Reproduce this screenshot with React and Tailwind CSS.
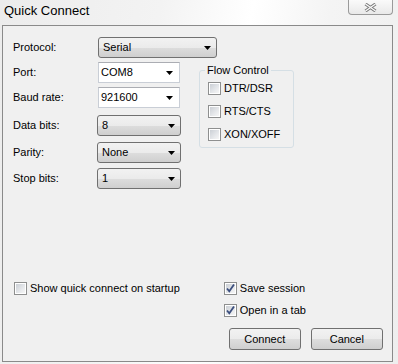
import { useState } from "react";

const font = { fontFamily: '"Liberation Sans", Arial, sans-serif' };

const Arrow = () => (
  <svg width="7" height="4" viewBox="0 0 7 4" className="shrink-0">
    <polygon points="0,0 7,0 3.5,4" fill="#000" />
  </svg>
);

// grey button-like dropdown (non editable)
const Combo = ({ value, className = "" }) => (
  <div
    className={`flex h-[21px] items-center justify-between rounded-[3px] border border-[#707070] bg-[linear-gradient(#f2f2f2_0%,#ebebeb_50%,#dddddd_51%,#cfcfcf_100%)] pl-[4px] pr-[5px] ${className}`}
  >
    <span>{value}</span>
    <Arrow />
  </div>
);

// white editable dropdown
const EditCombo = ({ value, className = "" }) => (
  <div
    className={`flex h-[21px] items-center justify-between border border-[#c9ced6] border-t-[#abadb3] bg-white pl-[2px] pr-[6px] ${className}`}
  >
    <span>{value}</span>
    <Arrow />
  </div>
);

const CheckBox = ({ checked, label, onClick }) => (
  <div className="flex h-[13px] cursor-default items-center" onClick={onClick}>
    <div className="flex h-[13px] w-[13px] shrink-0 items-center justify-center border border-[#8e8f8f] bg-white">
      <div className="relative h-[9px] w-[9px] bg-[linear-gradient(135deg,#cbcfd5_0%,#e6e8eb_60%,#f6f6f6_100%)]">
        {checked && (
          <svg width="11" height="11" viewBox="0 0 11 11" className="absolute left-[-1px] top-[-1px]">
            <path d="M2 5.5 L4.3 8.3 L9 1.5" fill="none" stroke="#3c4f7e" strokeWidth="1.8" />
          </svg>
        )}
      </div>
    </div>
    <span className="ml-[3px]">{label}</span>
  </div>
);

const Button = ({ children }) => (
  <button className="flex h-[22px] w-[72px] items-center justify-center rounded-[3px] border border-[#707070] bg-[linear-gradient(#f2f2f2_0%,#ebebeb_50%,#dddddd_51%,#cfcfcf_100%)] text-black">
    {children}
  </button>
);

const Row = ({ label, children, className = "" }) => (
  <div className={`flex items-center ${className}`}>
    <span className="w-[84px] shrink-0">{label}</span>
    {children}
  </div>
);

export default function App() {
  const [flow, setFlow] = useState({ dtr: false, rts: false, xon: false });
  const [showStartup, setShowStartup] = useState(false);
  const [saveSession, setSaveSession] = useState(true);
  const [openTab, setOpenTab] = useState(true);

  return (
    <div
      className="h-[364px] w-[398px] overflow-hidden bg-[linear-gradient(100deg,#ececec_0%,#f3f3f3_35%,#ffffff_55%,#f4f4f4_72%,#eeeeee_100%)] text-[11px] leading-[13px] text-black"
      style={font}
    >
      {/* title bar */}
      <div className="flex h-[25px] items-start justify-between">
        <span className="ml-[4px] mt-[2px] text-[13px] leading-[17px] text-black">Quick Connect</span>
        <div className="mr-[5px] flex h-[15px] w-[45px] items-center justify-center rounded-b-[4px] border border-t-0 border-[#9a9a9a] bg-[linear-gradient(#fafafa,#e9e9e9)]">
          <svg width="13" height="9" viewBox="0 0 13 9">
            <path d="M1.5 1 L11.5 8 M11.5 1 L1.5 8" stroke="#7a7a7a" strokeWidth="3.2" />
            <path d="M1.5 1 L11.5 8 M11.5 1 L1.5 8" stroke="#fdfdfd" strokeWidth="1.2" />
          </svg>
        </div>
      </div>

      {/* client area */}
      <div className="ml-[2px] flex h-[337px] w-[391px] flex-col border border-[#8a8a8a] bg-[#f0f0f0]">
        <div className="pl-[10px]">
          <Row label="Protocol:" className="mt-[11px]">
            <Combo value="Serial" className="ml-[1px] w-[119px]" />
          </Row>

          <div className="mt-[4px] flex">
            <div className="flex flex-col">
              <Row label="Port:">
                <EditCombo value="COM8" className="ml-[1px] w-[82px]" />
              </Row>
              <Row label="Baud rate:" className="mt-[4px]">
                <EditCombo value="921600" className="ml-[1px] w-[82px]" />
              </Row>
              <Row label="Data bits:" className="mt-[7px]">
                <Combo value="8" className="w-[84px]" />
              </Row>
              <Row label="Parity:" className="mt-[6px]">
                <Combo value="None" className="w-[84px]" />
              </Row>
              <Row label="Stop bits:" className="mt-[5px]">
                <Combo value="1" className="w-[84px]" />
              </Row>
            </div>

            <fieldset className="ml-[18px] mt-[2px] h-[84px] w-[95px] rounded-[3px] border border-[#d5dfe5] p-0 pb-[5px] pl-[8px]">
              <legend className="ml-[-3px] px-[2px] leading-[13px]">Flow Control</legend>
              <div className="mt-[5px] flex flex-col gap-[10px]">
                <CheckBox label="DTR/DSR" checked={flow.dtr} onClick={() => setFlow({ ...flow, dtr: !flow.dtr })} />
                <CheckBox label="RTS/CTS" checked={flow.rts} onClick={() => setFlow({ ...flow, rts: !flow.rts })} />
                <CheckBox label="XON/XOFF" checked={flow.xon} onClick={() => setFlow({ ...flow, xon: !flow.xon })} />
              </div>
            </fieldset>
          </div>
        </div>

        {/* bottom part */}
        <div className="mt-auto flex pb-[11px]">
          <div className="ml-[11px]">
            <CheckBox label="Show quick connect on startup" checked={showStartup} onClick={() => setShowStartup(!showStartup)} />
          </div>
          <div className="ml-[44px] flex flex-col">
            <CheckBox label="Save session" checked={saveSession} onClick={() => setSaveSession(!saveSession)} />
            <div className="mt-[9px]">
              <CheckBox label="Open in a tab" checked={openTab} onClick={() => setOpenTab(!openTab)} />
            </div>
            <div className="ml-[5px] mt-[11px] flex gap-[10px]">
              <Button>Connect</Button>
              <Button>Cancel</Button>
            </div>
          </div>
        </div>
      </div>
    </div>
  );
}
